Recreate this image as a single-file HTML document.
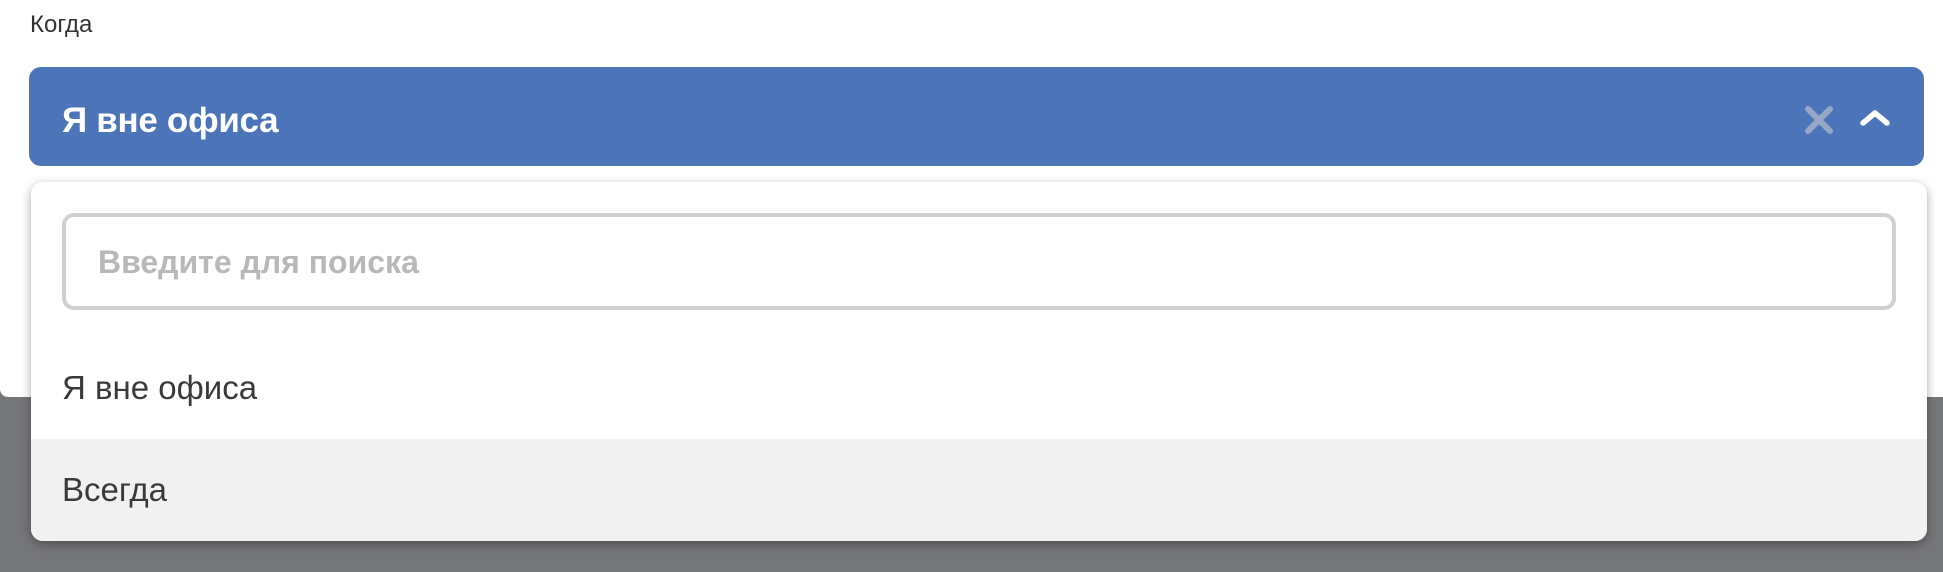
<!DOCTYPE html>
<html><head><meta charset="utf-8"><style>
body{margin:0;width:1943px;height:572px;position:relative;overflow:hidden;background:#757679;font-family:"Liberation Sans","DejaVu Sans",sans-serif}
.card{position:absolute;left:0;top:0;width:1943px;height:397px;background:#fff;border-radius:0 0 0 8px}
.lbl{position:absolute;left:30px;top:11px;font-size:24px;color:#333}
.sel{position:absolute;left:29px;top:67px;width:1895px;height:99px;background:#4b75b8;border-radius:12px}
.sel span{position:absolute;left:33px;top:34px;font-size:35px;font-weight:bold;color:#fff;letter-spacing:-0.3px}
.panel{position:absolute;left:31px;top:182px;width:1896px;height:359px;background:#fff;border-radius:12px;box-shadow:0 3px 10px rgba(0,0,0,.35);overflow:hidden}
.inp{position:absolute;left:31px;top:31px;width:1826px;height:89px;border:4px solid #d0d0d0;border-radius:12px}
.inp span{position:absolute;left:32px;top:27px;font-size:32px;font-weight:bold;color:#b8b8b8}
.o1{position:absolute;left:31px;top:187px;font-size:33px;color:#3a3a3a}
.o2{position:absolute;left:0;top:257px;width:100%;height:102px;background:#f1f1f1}
.o2 span{position:absolute;left:31px;top:32px;font-size:33px;color:#3a3a3a}
</style></head><body>
<div class="card"></div>
<div class="lbl">Когда</div>
<div class="sel"><span>Я вне офиса</span>
<svg style="position:absolute;left:1774px;top:37px" width="32" height="32" viewBox="0 0 32 32"><path d="M5 5L27 27M27 5L5 27" stroke="#97a8c6" stroke-width="6" stroke-linecap="round"/></svg>
<svg style="position:absolute;left:1829px;top:40px" width="34" height="22" viewBox="0 0 34 22"><path d="M5 16L17 6L29 16" stroke="#fff" stroke-width="5.5" fill="none" stroke-linecap="round" stroke-linejoin="round"/></svg>
</div>
<div class="panel">
<div class="inp"><span>Введите для поиска</span></div>
<div class="o1">Я вне офиса</div>
<div class="o2"><span>Всегда</span></div>
</div>
</body></html>
